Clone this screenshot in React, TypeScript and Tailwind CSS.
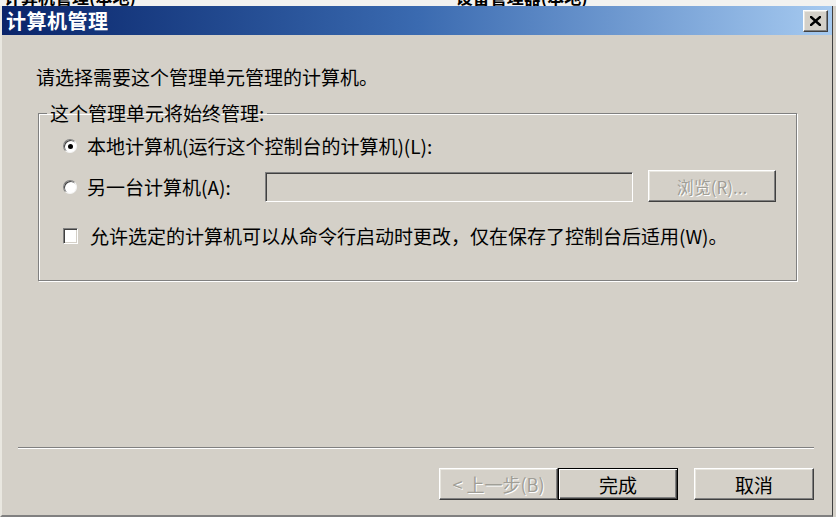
export default function App() {
  const raised =
    "border border-t-white border-l-white border-r-[#404040] border-b-[#404040] shadow-[inset_-1px_-1px_0_#808080,inset_1px_1px_0_#e8e6df]";
  return (
    <div className="w-[836px] h-[517px] overflow-hidden bg-[#d4d0c8] font-['Noto_Sans_CJK_SC','Noto_Sans',sans-serif] text-black flex flex-col">
      {/* strip of window behind */}
      <div className="h-[6px] overflow-hidden bg-[#f2f2f0] flex shrink-0">
        <div className="ml-[4px] h-[6px] overflow-hidden">
          <div className="-mt-[13px] text-[17px] font-bold leading-[20px] whitespace-nowrap">计算机管理(本地)</div>
        </div>
        <div className="ml-[320px] h-[6px] overflow-hidden">
          <div className="-mt-[13px] text-[17px] font-bold leading-[20px] whitespace-nowrap">设备管理器(本地)</div>
        </div>
      </div>
      <div className="flex-1 flex flex-col w-[833px] border-l-2 border-l-[#e9e7e0] border-r border-r-[#404040] border-b-2 border-b-[#808080]">
        {/* title bar */}
        <div className="h-[29px] shrink-0 flex items-center justify-between bg-gradient-to-r from-[#0a246a] via-[#3a6ab0] to-[#a6caf0] pl-[4px] pr-[4px]">
          <span className="text-white font-bold text-[20px] leading-none tracking-[0.5px]">计算机管理</span>
          <div className={`w-[25px] h-[22px] bg-[#d4d0c8] flex items-center justify-center ${raised}`}>
            <svg width="11" height="10" viewBox="0 0 11 10">
              <path d="M1 1 L10 9 M10 1 L1 9" stroke="#000" strokeWidth="2.4" strokeLinecap="square" />
            </svg>
          </div>
        </div>
        {/* body */}
        <div className="flex-1 flex flex-col pl-[16px] pr-[18px]">
          <div className="mt-[30px] ml-[18px] text-[19px] leading-[24px] whitespace-nowrap">
            请选择需要这个管理单元管理的计算机。
          </div>
          <fieldset className="mt-[13px] ml-[20px] w-[759px] border border-[#808080] shadow-[inset_1px_1px_0_#fff,1px_1px_0_#fff] pl-[24px] pb-[32px]">
            <legend className="-ml-[16px] px-[3px] text-[19px] leading-[22px] whitespace-nowrap">这个管理单元将始终管理:</legend>
            <div className="mt-[10px] h-[24px] flex items-center">
              <Radio checked />
              <span className="ml-[10px] text-[19px] leading-[24px] whitespace-nowrap">本地计算机(运行这个控制台的计算机)(L):</span>
            </div>
            <div className="mt-[14px] h-[30px] flex items-center">
              <Radio />
              <span className="ml-[10px] text-[19px] leading-[24px] whitespace-nowrap w-[178px]">另一台计算机(A):</span>
              <div className="w-[368px] h-[30px] bg-[#d4d0c8] border border-t-[#808080] border-l-[#808080] border-r-white border-b-white shadow-[inset_1px_1px_0_#404040]" />
              <div className={`ml-[15px] -mt-[2px] w-[128px] h-[32px] flex items-center justify-center ${raised}`}>
                <span className="text-[17px] leading-none text-[#a09e96] [text-shadow:1px_1px_0_#fff]">浏览(R)...</span>
              </div>
            </div>
            <div className="mt-[22px] h-[24px] flex items-center">
              <div className="w-[15px] h-[16px] bg-white border border-t-[#808080] border-l-[#808080] border-r-white border-b-white shadow-[inset_1px_1px_0_#404040,inset_-1px_-1px_0_#d4d0c8]" />
              <span className="ml-[12px] text-[19px] leading-[24px] whitespace-nowrap">允许选定的计算机可以从命令行启动时更改，仅在保存了控制台后适用(W)。</span>
            </div>
          </fieldset>
          {/* footer */}
          <div className="mt-auto">
            <div className="h-[2px] border-t border-t-[#808080] border-b border-b-white" />
            <div className="mt-[19px] mb-[15px] flex justify-end">
              <div className={`w-[119px] h-[32px] flex items-center justify-center ${raised}`}>
                <span className="text-[18px] leading-none text-[#a09e96] [text-shadow:1px_1px_0_#fff] whitespace-nowrap">&lt; 上一步(B)</span>
              </div>
              <div className="w-[120px] h-[32px] flex items-center justify-center border border-black shadow-[inset_1px_1px_0_#fff,inset_-1px_-1px_0_#404040,inset_-2px_-2px_0_#808080]">
                <span className="text-[19px] leading-none">完成</span>
              </div>
              <div className={`ml-[16px] w-[120px] h-[32px] flex items-center justify-center ${raised}`}>
                <span className="text-[19px] leading-none">取消</span>
              </div>
            </div>
          </div>
        </div>
      </div>
    </div>
  );
}

function Radio({ checked = false }: { checked?: boolean }) {
  return (
    <div className="w-[14px] h-[14px] rounded-full bg-white border border-t-[#808080] border-l-[#808080] border-r-[#f4f4f4] border-b-[#f4f4f4] shadow-[inset_1px_1px_0_#404040] flex items-center justify-center shrink-0">
      {checked && <div className="w-[5px] h-[5px] rounded-full bg-black" />}
    </div>
  );
}
